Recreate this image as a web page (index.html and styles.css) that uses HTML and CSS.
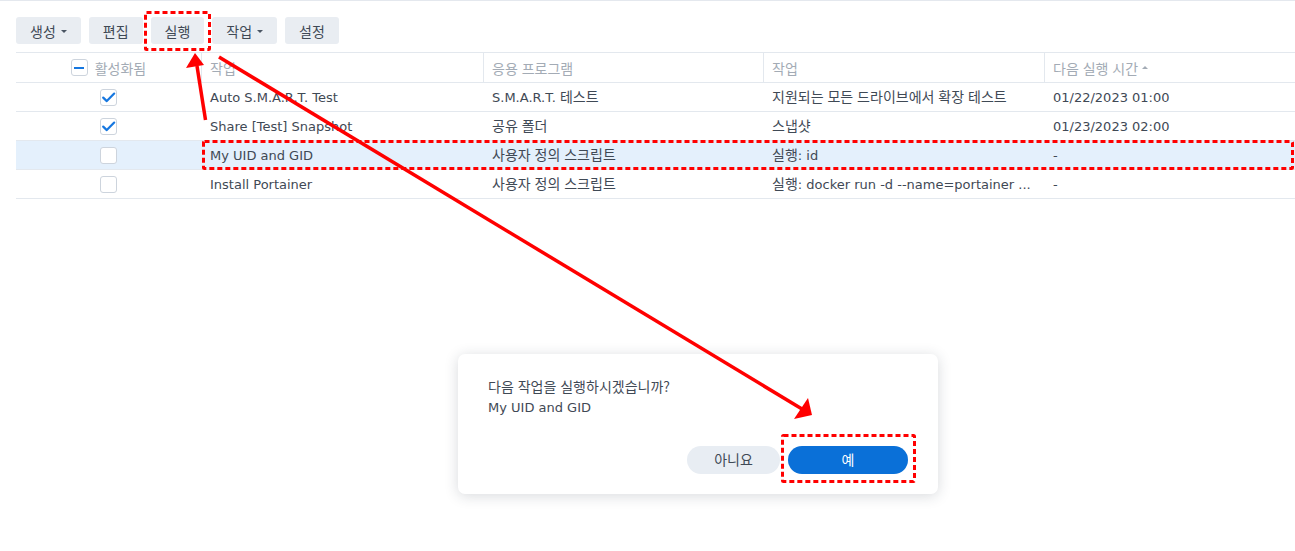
FILE: index.html
```html
<!DOCTYPE html>
<html lang="ko">
<head>
<meta charset="utf-8">
<title>작업 스케줄러</title>
<link rel="stylesheet" href="styles.css">
</head>
<body>
<div class="app">
  <div class="toolbar">
    <button class="tbtn"><span class="ko">생성</span><span class="caret"></span></button>
    <button class="tbtn"><span class="ko">편집</span></button>
    <button class="tbtn"><span class="ko">실행</span></button>
    <button class="tbtn"><span class="ko">작업</span><span class="caret"></span></button>
    <button class="tbtn"><span class="ko">설정</span></button>
  </div>

  <div class="grid">
    <div class="row head">
      <div class="cell c-check"><span class="cbox partial"><span class="bar"></span></span><span class="htext ko">활성화됨</span></div>
      <div class="cell"><span class="ko">작업</span></div>
      <div class="cell"><span class="ko">응용 프로그램</span></div>
      <div class="cell"><span class="ko">작업</span></div>
      <div class="cell"><span class="ko">다음 실행 시간</span><span class="sort"></span></div>
    </div>
    <div class="row">
      <div class="cell c-check"><span class="cbox"><svg class="tick" viewBox="0 0 17 17"><path d="M3.2 8.6 L6.8 12.1 L14.2 4.6"/></svg></span></div>
      <div class="cell">Auto S.M.A.R.T. Test</div>
      <div class="cell">S.M.A.R.T. <span class="ko">테스트</span></div>
      <div class="cell"><span class="ko">지원되는 모든 드라이브에서 확장 테스트</span></div>
      <div class="cell">01/22/2023 01:00</div>
    </div>
    <div class="row">
      <div class="cell c-check"><span class="cbox"><svg class="tick" viewBox="0 0 17 17"><path d="M3.2 8.6 L6.8 12.1 L14.2 4.6"/></svg></span></div>
      <div class="cell">Share [Test] Snapshot</div>
      <div class="cell"><span class="ko">공유 폴더</span></div>
      <div class="cell"><span class="ko">스냅샷</span></div>
      <div class="cell">01/23/2023 02:00</div>
    </div>
    <div class="row selected">
      <div class="cell c-check"><span class="cbox"></span></div>
      <div class="cell">My UID and GID</div>
      <div class="cell"><span class="ko">사용자 정의 스크립트</span></div>
      <div class="cell"><span class="ko">실행</span>: id</div>
      <div class="cell">-</div>
    </div>
    <div class="row">
      <div class="cell c-check"><span class="cbox"></span></div>
      <div class="cell">Install Portainer</div>
      <div class="cell"><span class="ko">사용자 정의 스크립트</span></div>
      <div class="cell"><span class="ko">실행</span>: docker run -d --name=portainer ...</div>
      <div class="cell">-</div>
    </div>
  </div>

  <div class="dialog">
    <div class="dmsg">
      <div><span class="ko">다음 작업을 실행하시겠습니까?</span></div>
      <div>My UID and GID</div>
    </div>
    <div class="dbtns">
      <button class="dbtn no"><span class="ko">아니요</span></button>
      <button class="dbtn yes"><span class="ko">예</span></button>
    </div>
  </div>

  <svg class="annot" width="1295" height="551" viewBox="0 0 1295 551">
    <g fill="none" stroke="#f00" stroke-width="3" stroke-dasharray="5 3">
      <rect x="145.5" y="12.5" width="64" height="37" rx="1"/>
      <rect x="203.5" y="141.5" width="1089" height="27" rx="1"/>
      <rect x="782.5" y="435.5" width="132" height="46" rx="1"/>
    </g>
    <g stroke="#f00" stroke-width="3.5" fill="#f00" stroke-linecap="butt">
      <line x1="205.5" y1="120" x2="197" y2="66"/>
      <polygon points="195,53 186,68 204,65" stroke="none"/>
      <line x1="219" y1="57" x2="802" y2="409"/>
      <polygon points="812,415 808,398 794,419" stroke="none"/>
    </g>
  </svg>
</div>
</body>
</html>
```

FILE: styles.css
```css
* { box-sizing: border-box; }

html, body {
  margin: 0;
  padding: 0;
  background: #fff;
}

body {
  font-family: "DejaVu Sans", "Noto Sans CJK KR", sans-serif;
  font-size: 13px;
  color: #3f4955;
  width: 1295px;
  height: 551px;
  overflow: hidden;
}

.ko {
  font-family: "Noto Sans CJK KR", sans-serif;
  font-size: 14px;
  line-height: 1;
}

.app {
  position: relative;
  width: 1295px;
  height: 551px;
  border-top: 1px solid #e4e8ee;
}

.toolbar {
  display: flex;
  gap: 8px;
  padding: 16px 0 0 16px;
}

.tbtn {
  height: 27px;
  padding: 0 14px;
  border: none;
  border-radius: 3px;
  background: #e9edf2;
  color: #3f4955;
  font-family: inherit;
  font-size: 13px;
  display: flex;
  align-items: center;
  gap: 5px;
}

.caret {
  width: 0;
  height: 0;
  border-left: 3px solid transparent;
  border-right: 3px solid transparent;
  border-top: 3px solid #4a5563;
  margin-top: 1px;
}

.grid {
  margin: 8px 0 0 16px;
  border-top: 1px solid #e3e8ee;
}

.row {
  display: grid;
  grid-template-columns: 185px 282px 280px 281px 251px;
  height: 29px;
  border-bottom: 1px solid #e3e8ee;
}

.row.head {
  height: 30px;
  color: #a3abb5;
}

.row.head .cell + .cell {
  border-left: 1px solid #e3e8ee;
}

.row:not(.head) .cell + .cell {
  padding-left: 9px;
}

.row.selected {
  background: #e4f0fc;
}

.cell {
  display: flex;
  align-items: center;
  padding-left: 8px;
  padding-right: 8px;
  white-space: nowrap;
  overflow: hidden;
  min-width: 0;
}

.row:not(.head) .cell {
  display: block;
  padding-top: 1px;
  line-height: 27px;
}

.row .cell.c-check {
  display: flex;
  justify-content: center;
  align-items: center;
  padding: 0;
  gap: 7px;
}

.cbox {
  width: 17px;
  height: 17px;
  border: 1px solid #cdd4dd;
  border-radius: 3px;
  background: #fff;
  display: inline-flex;
  align-items: center;
  justify-content: center;
  position: relative;
  flex: none;
}

.cbox .bar {
  width: 10px;
  height: 2px;
  background: #1677e0;
}

.tick {
  position: absolute;
  left: -1px;
  top: -1px;
  width: 17px;
  height: 17px;
}

.tick path {
  fill: none;
  stroke: #1677e0;
  stroke-width: 2.2;
  stroke-linecap: round;
  stroke-linejoin: round;
}

.htext {
  color: #a3abb5;
}

.sort {
  width: 0;
  height: 0;
  border-left: 3px solid transparent;
  border-right: 3px solid transparent;
  border-bottom: 3px solid #a3abb5;
  margin-left: 4px;
  margin-top: -1px;
}

.dialog {
  position: absolute;
  left: 458px;
  top: 353px;
  width: 480px;
  height: 140px;
  background: #fff;
  border-radius: 7px;
  box-shadow: 0 2px 14px rgba(40, 50, 65, 0.18);
  padding: 24px 30px 20px 30px;
  display: flex;
  flex-direction: column;
}

.dmsg {
  line-height: 20px;
}

.dbtns {
  margin-top: auto;
  display: flex;
  justify-content: flex-end;
  gap: 8px;
}

.dbtn {
  height: 28px;
  border: none;
  border-radius: 14px;
  font-family: inherit;
  font-size: 13px;
}

.dbtn.no {
  width: 93px;
  background: #e8edf3;
  color: #3f4955;
}

.dbtn.yes {
  width: 120px;
  background: #0a70d8;
  color: #fff;
}

.annot {
  position: absolute;
  left: 0;
  top: -1px;
  pointer-events: none;
}
```
